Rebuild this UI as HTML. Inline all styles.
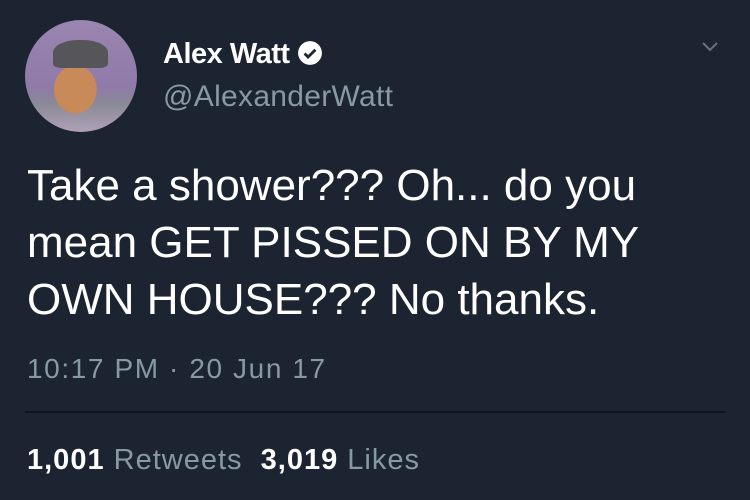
<!DOCTYPE html>
<html><head><style>
body{margin:0;width:750px;height:500px;background:#1c2331;font-family:"Liberation Sans",sans-serif;overflow:hidden;position:relative}
.av{position:absolute;left:25px;top:20px;width:112px;height:112px;border-radius:50%;background:radial-gradient(ellipse at 45% 62%,#c98a5a 0 24%,transparent 25%),linear-gradient(#9a86b0,#8f7aa8 60%,#8a8a96 75%,#b0a0b8);overflow:hidden}
.hat{position:absolute;left:28px;top:20px;width:55px;height:28px;background:#55555a;border-radius:45% 45% 15% 15%}
.a{position:absolute;white-space:nowrap}
.name{left:163px;top:38px;color:#fff;font-weight:bold;font-size:29px;letter-spacing:-0.5px}
.handle{left:163px;top:80px;color:#8899a6;font-size:30px;letter-spacing:0.3px}
.txt{left:27px;top:157px;color:#fff;font-size:44px;line-height:57px;letter-spacing:0px}
.time{left:27px;top:353px;color:#8899a6;font-size:28px;letter-spacing:1.6px}
.line{position:absolute;left:25px;top:411px;width:700px;height:2px;background:#10151d}
.stats{left:27px;top:444px;color:#8899a6;font-size:29px;letter-spacing:1px}
.stats b{color:#fff}
</style></head><body>
<div class="av"><div class="hat"></div></div>
<div class="a name">Alex Watt <svg width="26" height="26" viewBox="0 0 24 24" style="vertical-align:-3px"><circle cx="12" cy="12" r="11" fill="#fff"/><path d="M7 12.5l3.2 3.2L17 9" stroke="#1c2331" stroke-width="2.6" fill="none"/></svg></div>
<div class="a handle">@AlexanderWatt</div>
<svg class="a" style="left:700px;top:40px" width="20" height="14" viewBox="0 0 20 14"><path d="M3 3l7 7 7-7" stroke="#66757f" stroke-width="2" fill="none"/></svg>
<div class="a txt">Take a shower??? Oh... do you<br>mean GET PISSED ON BY MY<br>OWN HOUSE??? No thanks.</div>
<div class="a time">10:17 PM · 20 Jun 17</div>
<div class="line"></div>
<div class="a stats"><b>1,001</b> Retweets &nbsp;<b>3,019</b> Likes</div>
</body></html>
